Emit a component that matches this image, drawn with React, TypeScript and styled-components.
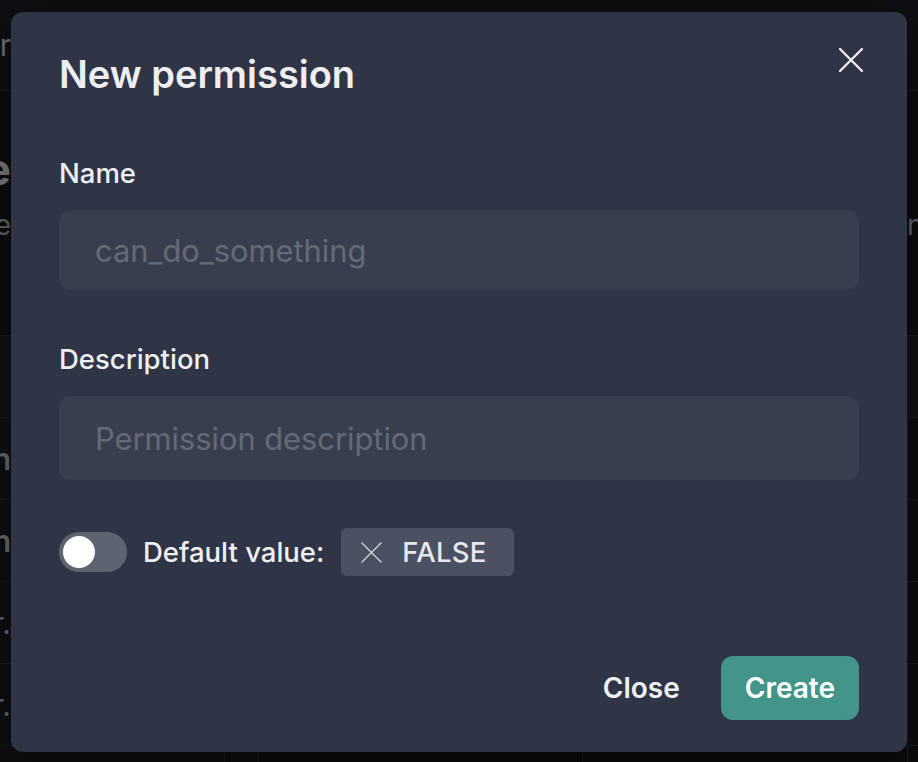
import * as React from 'react';
import styled, { createGlobalStyle } from 'styled-components';

const GlobalStyle = createGlobalStyle`
    html, body {
        margin: 0;
        padding: 0;
        background: #0c0d10;
    }
    body {
        font-family: Inter, "Noto Sans", "Liberation Sans", sans-serif;
        -webkit-font-smoothing: antialiased;
    }
    * {
        box-sizing: border-box;
    }
`

// ---- page behind the dialog (dimmed) ----

const Page = styled.div`
    position: relative;
    width: 918px;
    height: 762px;
    overflow: hidden;
    background: #0c0d10;
    display: flex;
    flex-direction: column;
`

const TopBar = styled.div`
    height: 91px;
    flex-shrink: 0;
    display: flex;
    align-items: center;
    justify-content: space-between;
    border-bottom: 1px solid #1d1e23;
    background: #0e0f12;
`

const Intro = styled.div`
    height: 244px;
    flex-shrink: 0;
    display: flex;
    justify-content: space-between;
`

const IntroColumn = styled.div`
    display: flex;
    flex-direction: column;
    padding-top: 52px;
    gap: 13px;
`

const Peek = styled.div<{ $side: 'left' | 'right' }>`
    width: 11px;
    overflow: hidden;
    display: flex;
    justify-content: ${p => (p.$side === 'left' ? 'flex-end' : 'flex-start')};
    white-space: nowrap;
`

const FaintText = styled.span<{ $size: number; $weight?: number; $color?: string }>`
    font-size: ${p => p.$size}px;
    font-weight: ${p => p.$weight ?? 400};
    color: ${p => p.$color ?? '#77797f'};
    line-height: 1.2;
`

const TableRow = styled.div<{ $head?: boolean }>`
    height: 82px;
    flex-shrink: 0;
    display: grid;
    grid-template-columns: 225px 34px 324px 325px 1fr;
    border-top: 1px solid #1b1c21;
    background: ${p => (p.$head ? '#111215' : 'transparent')};
`

const Cell = styled.div<{ $tint?: boolean }>`
    display: flex;
    align-items: center;
    border-right: 1px solid #1b1c21;
    background: ${p => (p.$tint ? '#0f1013' : 'transparent')};
    &:last-child {
        border-right: none;
    }
`

// ---- dialog ----

const Dialog = styled.div`
    position: absolute;
    left: 11px;
    top: 12px;
    width: 896px;
    background: #2f3546;
    border-radius: 12px;
    box-shadow: 0 20px 50px rgba(0, 0, 0, 0.5);
    display: flex;
    flex-direction: column;
`

const Header = styled.header`
    padding: 35px 48px 33px;
`

const Title = styled.h2`
    margin: 0;
    font-size: 38px;
    line-height: 54px;
    font-weight: 600;
    color: #eeeff2;
`

const CloseButton = styled.button`
    position: absolute;
    top: 16px;
    right: 24px;
    width: 64px;
    height: 64px;
    display: flex;
    align-items: center;
    justify-content: center;
    background: transparent;
    border: none;
    border-radius: 12px;
    padding: 0;
    cursor: pointer;
`

const Body = styled.div`
    padding: 18px 48px 48px;
    display: flex;
    flex-direction: column;
`

const Field = styled.div<{ $gap?: number }>`
    display: flex;
    flex-direction: column;
    margin-top: ${p => p.$gap ?? 0}px;
`

const Label = styled.label`
    font-size: 27.5px;
    line-height: 42px;
    font-weight: 500;
    color: #eeeff2;
    margin-bottom: 16px;
`

const Input = styled.input<{ $height: number }>`
    height: ${p => p.$height}px;
    width: 100%;
    border: none;
    outline: none;
    border-radius: 12px;
    background: #393e4e;
    padding: 0 36px;
    font-family: inherit;
    font-size: 30.8px;
    color: #eeeff2;
    &::placeholder {
        color: #656a78;
    }
`

const ToggleRow = styled.div`
    margin-top: 48px;
    height: 48px;
    display: flex;
    align-items: center;
`

const Track = styled.span<{ $on: boolean }>`
    width: 68px;
    height: 40px;
    border-radius: 20px;
    padding: 4px;
    display: flex;
    justify-content: ${p => (p.$on ? 'flex-end' : 'flex-start')};
    background: ${p => (p.$on ? '#43958a' : '#5e6371')};
    cursor: pointer;
`

const Thumb = styled.span`
    width: 32px;
    height: 32px;
    border-radius: 50%;
    background: #ffffff;
`

const ToggleText = styled.span`
    margin-left: 16px;
    font-size: 27.5px;
    font-weight: 500;
    color: #eeeff2;
`

const ValueTag = styled.span`
    margin-left: 17px;
    height: 48px;
    display: inline-flex;
    align-items: center;
    gap: 20px;
    padding: 0 28px 0 20px;
    border-radius: 6px;
    background: #4b5162;
    font-size: 27.5px;
    font-weight: 500;
    letter-spacing: 0.2px;
    color: #e6e8ec;
`

const Footer = styled.footer`
    padding: 32px 48px;
    display: flex;
    justify-content: flex-end;
    gap: 17px;
`

const Button = styled.button<{ $primary?: boolean }>`
    height: 64px;
    padding: 0 24px;
    border: none;
    border-radius: 12px;
    font-family: inherit;
    font-size: 28px;
    font-weight: 600;
    color: ${p => (p.$primary ? '#ffffff' : '#eeeff2')};
    background: ${p => (p.$primary ? '#43958a' : 'transparent')};
    cursor: pointer;
`

const XIcon = ({ size, stroke, width }: { size: number; stroke: string; width: number }) => (
    <svg width={size} height={size} viewBox="0 0 24 24" fill="none">
        <path d="M1 1L23 23M23 1L1 23" stroke={stroke} strokeWidth={width} strokeLinecap="round" />
    </svg>
)

const rows = [
    { left: 'n', weight: 600 },
    { left: 'n', weight: 600 },
    { left: 'r.', weight: 400 },
    { left: 'r.', weight: 400 },
    { left: '', weight: 400 },
]

export default function App() {
    const [on, setOn] = React.useState(false);
    return (
        <>
            <GlobalStyle />
            <Page>
                <TopBar>
                    <Peek $side="left"><FaintText $size={30} $color="#6f7177">Permissions Header</FaintText></Peek>
                    <Peek $side="right"><FaintText $size={28}>{'\u00a0'}</FaintText></Peek>
                </TopBar>
                <Intro>
                    <IntroColumn>
                        <Peek $side="left"><FaintText $size={44} $weight={700} $color="#7c7e83">Role</FaintText></Peek>
                        <Peek $side="left"><FaintText $size={28} $color="#66686e">create</FaintText></Peek>
                    </IntroColumn>
                    <IntroColumn>
                        <Peek $side="right"><FaintText $size={44}>{'\u00a0'}</FaintText></Peek>
                        <Peek $side="right"><FaintText $size={28} $color="#66686e">name</FaintText></Peek>
                    </IntroColumn>
                </Intro>
                <TableRow $head>
                    <Cell /><Cell /><Cell /><Cell /><Cell />
                </TableRow>
                {rows.map((r, i) => (
                    <TableRow key={i}>
                        <Cell $tint>
                            <Peek $side="left">
                                <FaintText $size={30} $weight={r.weight} $color="#6d6f75">{r.left ? 'permission' + r.left : ''}</FaintText>
                            </Peek>
                        </Cell>
                        <Cell $tint /><Cell /><Cell /><Cell />
                    </TableRow>
                ))}

                <Dialog role="dialog" aria-label="New permission">
                    <Header>
                        <Title>New permission</Title>
                    </Header>
                    <CloseButton aria-label="Close">
                        <XIcon size={24} stroke="#eceef1" width={2.4} />
                    </CloseButton>
                    <Body>
                        <Field>
                            <Label>Name</Label>
                            <Input $height={80} placeholder="can_do_something" />
                        </Field>
                        <Field $gap={48}>
                            <Label>Description</Label>
                            <Input $height={84} placeholder="Permission description" />
                        </Field>
                        <ToggleRow>
                            <Track $on={on} onClick={() => setOn(!on)}>
                                <Thumb />
                            </Track>
                            <ToggleText>Default value:</ToggleText>
                            <ValueTag>
                                <XIcon size={21} stroke="#dfe1e6" width={1.6} />
                                {on ? 'TRUE' : 'FALSE'}
                            </ValueTag>
                        </ToggleRow>
                    </Body>
                    <Footer>
                        <Button>Close</Button>
                        <Button $primary>Create</Button>
                    </Footer>
                </Dialog>
            </Page>
        </>
    )
}
